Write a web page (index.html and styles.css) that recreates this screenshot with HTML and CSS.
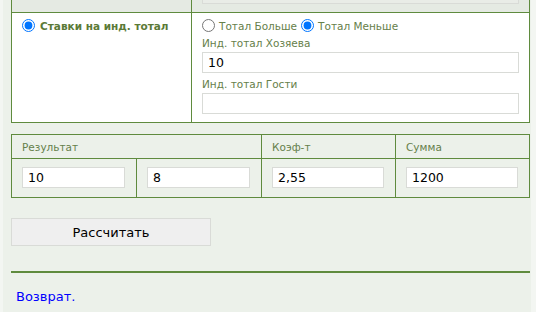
FILE: index.html
```html
<!DOCTYPE html>
<html lang="ru">
<head>
    <meta charset="UTF-8">
    <title>Калькулятор ставок</title>
    <link rel="stylesheet" href="styles.css">
</head>
<body>
    <div class="page">
        <form class="calc-form">
            <table class="bet-table">
                <tr class="bet-head">
                    <td class="bet-type"></td>
                    <td class="bet-fields">
                        <input type="text" class="field field-muted">
                    </td>
                </tr>
                <tr>
                    <td class="bet-type">
                        <label class="bet-choice">
                            <input type="radio" name="bet-kind" checked>
                            <span>Ставки на инд. тотал</span>
                        </label>
                    </td>
                    <td class="bet-fields">
                        <div class="radio-row">
                            <label><input type="radio" name="total-kind"> Тотал Больше</label>
                            <label><input type="radio" name="total-kind" checked> Тотал Меньше</label>
                        </div>
                        <label class="field-label" for="home-total">Инд. тотал Хозяева</label>
                        <input type="text" id="home-total" class="field" value="10">
                        <label class="field-label" for="guest-total">Инд. тотал Гости</label>
                        <input type="text" id="guest-total" class="field">
                    </td>
                </tr>
            </table>

            <table class="result-table">
                <tr class="result-head">
                    <td colspan="2">Результат</td>
                    <td>Коэф-т</td>
                    <td>Сумма</td>
                </tr>
                <tr>
                    <td class="col-home"><input type="text" class="field" value="10"></td>
                    <td class="col-guest"><input type="text" class="field" value="8"></td>
                    <td class="col-rate"><input type="text" class="field" value="2,55"></td>
                    <td class="col-sum"><input type="text" class="field" value="1200"></td>
                </tr>
            </table>

            <button type="button" class="calc-button">Рассчитать</button>
        </form>

        <hr class="divider">

        <p class="back-link"><a href="#">Возврат.</a></p>
    </div>
</body>
</html>
```

FILE: styles.css
```css
* {
    box-sizing: border-box;
}

html,
body {
    height: 100%;
}

body {
    margin: 0;
    background: #f3f6f2;
    font-family: "DejaVu Sans", Verdana, sans-serif;
    font-size: 10.5px;
    color: #66804a;
    overflow: hidden;
}

.page {
    margin: -26px 0 0 3px;
    width: 528px;
    min-height: calc(100% + 26px);
    padding: 0 0 0 8px;
    background: #ecf1ea;
}

table {
    border-collapse: collapse;
    width: 519px;
}

td {
    border: 1px solid #5f8b3e;
    vertical-align: top;
}

.field {
    display: block;
    width: 100%;
    height: 21px;
    padding: 1px 5px;
    border: 1px solid #d9dbd7;
    background: #fff;
    font-family: "DejaVu Sans", Verdana, sans-serif;
    font-size: 12.5px;
    color: #000;
    outline: none;
}

.field-muted {
    background: #e9ece7;
}

/* bet type table */
.bet-table .bet-type {
    width: 180px;
    padding: 6px 10px 8px;
    background: #fff;
}

.bet-table .bet-fields {
    padding: 6px 10px 8px;
    background: #fff;
}

.bet-table .bet-head td {
    background: #e5eae3;
    padding: 8px 10px;
}

.bet-choice {
    display: flex;
    align-items: center;
    gap: 5px;
    height: 13px;
    font-weight: bold;
    color: #5b7a37;
}

input[type="radio"] {
    margin: 0;
    width: 13px;
    height: 13px;
}

.radio-row {
    display: flex;
    gap: 4px;
    height: 13px;
    align-items: center;
}

.radio-row label {
    display: flex;
    align-items: center;
    gap: 4px;
}

.field-label {
    display: block;
    margin: 4px 0 2px;
    line-height: 14px;
}

/* result table */
.result-table {
    margin-top: 11px;
}

.result-head td {
    height: 24px;
    padding: 0 10px;
    vertical-align: middle;
}

.result-table tr:last-child td {
    padding: 8px 11px 8px 10px;
    height: 39px;
}

.col-home,
.col-guest {
    width: 125px;
}

.col-rate {
    width: 134px;
}

.calc-button {
    display: block;
    margin-top: 20px;
    width: 200px;
    height: 28px;
    border: 1px solid #d9dbd7;
    background: #efefef;
    font-family: "DejaVu Sans", Verdana, sans-serif;
    font-size: 13px;
    color: #000;
}

.divider {
    margin: 25px 0 0;
    width: 519px;
    height: 2px;
    border: none;
    background: #5f8b3e;
}

.back-link {
    margin: 16px 0 0;
    padding-left: 5px;
    font-size: 13px;
}

.back-link a {
    color: #0000ff;
    text-decoration: none;
}
```
